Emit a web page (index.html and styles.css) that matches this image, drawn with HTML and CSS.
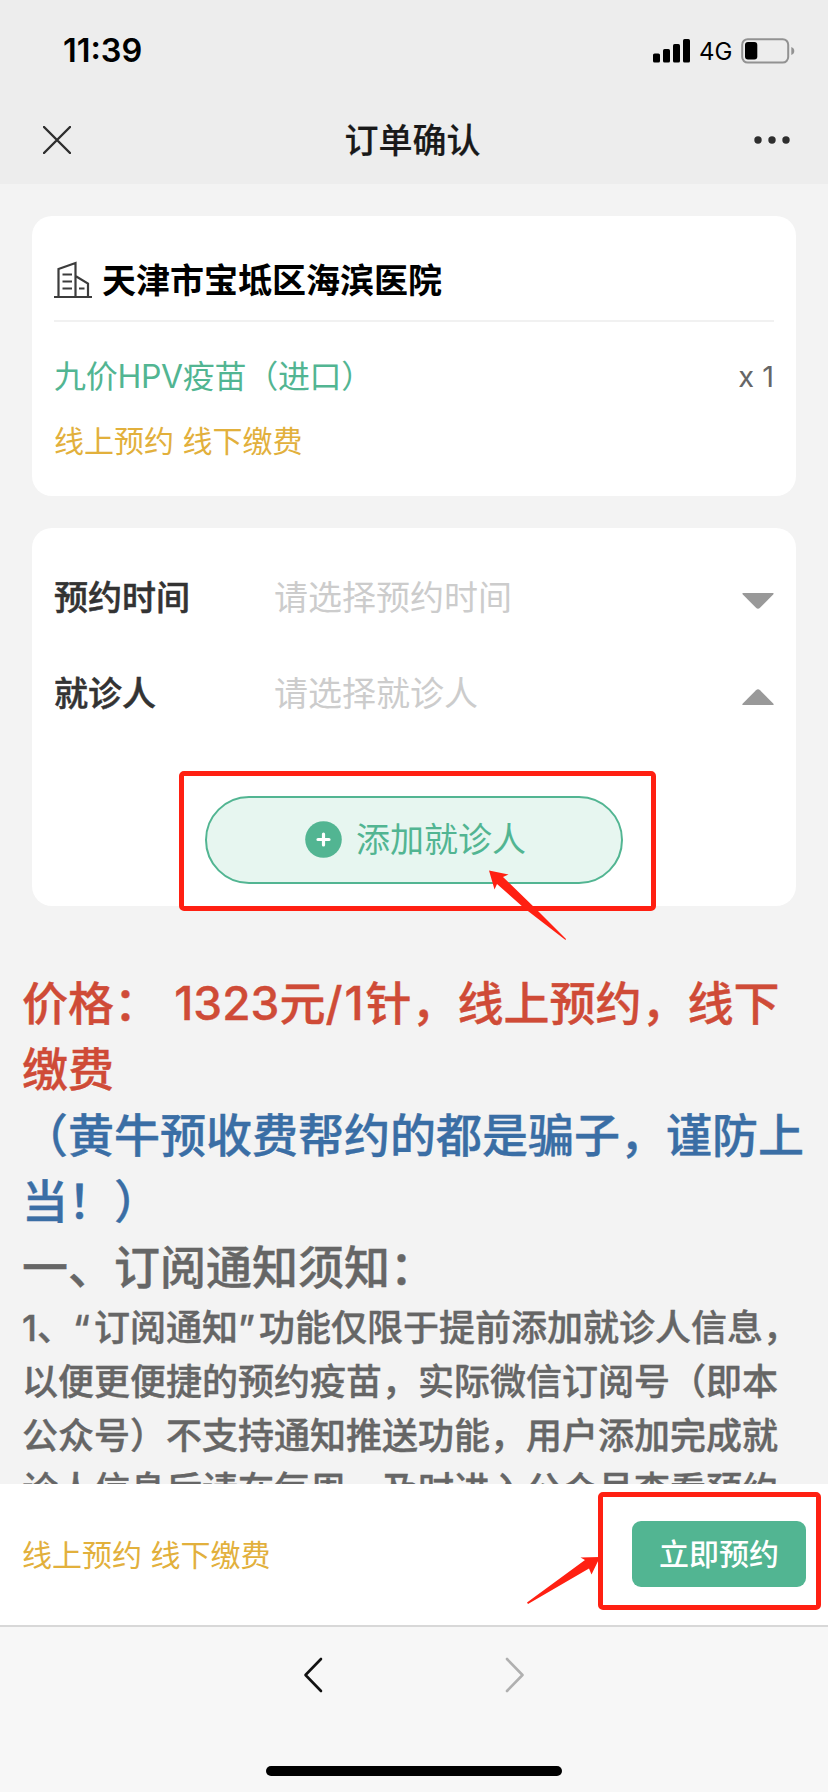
FILE: index.html
```html
<!DOCTYPE html>
<html lang="zh-CN">
<head>
<meta charset="utf-8">
<title>订单确认</title>
<link rel="stylesheet" href="styles.css">
</head>
<body>
<div class="screen">
  <header class="top">
    <div class="status">
      <span class="clock">11:39</span>
      <div class="indicators">
        <svg class="signal" width="37" height="24" viewBox="0 0 37 24"><rect x="0" y="14.5" width="7" height="9" rx="1.6"/><rect x="10" y="10" width="7" height="13.5" rx="1.6"/><rect x="20" y="5" width="7" height="18.5" rx="1.6"/><rect x="30" y="0" width="7" height="23.5" rx="1.6"/></svg>
        <span class="net">4G</span>
        <svg width="54" height="26" viewBox="0 0 54 26"><rect x="1.2" y="1.2" width="46" height="23.4" rx="5.5" fill="none" stroke="#929292" stroke-width="2"/><rect x="4" y="4" width="12.3" height="17.6" rx="3" fill="#000"/><path d="M50.3 9v8q3-1.2 3-4t-3-4z" fill="#929292"/></svg>
      </div>
    </div>
    <div class="nav">
      <svg width="28" height="28" viewBox="0 0 28 28"><path d="M1 1l26 26M27 1L1 27" stroke="#2e2e2e" stroke-width="2.4" stroke-linecap="round"/></svg>
      <h1 class="nav-title">订单确认</h1>
      <svg width="36" height="8" viewBox="0 0 36 8" fill="#2e2e2e"><circle cx="4" cy="4" r="3.7"/><circle cx="18" cy="4" r="3.7"/><circle cx="32" cy="4" r="3.7"/></svg>
    </div>
  </header>

  <main class="content">
    <section class="card order">
      <div class="hospital">
        <svg class="building" width="38" height="38" viewBox="0 0 38 38" fill="none" stroke="#3c3c3c" stroke-width="2.2"><path d="M0 36h38"/><path d="M4.500 36V8L21.500 2v34M21.500 15L34 22.500V36"/><path d="M8.500 13.500h9.500M8.500 20.500h9.500M8.500 27.500h9.500M25 27.500h5.500"/></svg>
        <h2 class="hospital-name">天津市宝坻区海滨医院</h2>
      </div>
      <div class="item"><span class="vaccine">九价HPV疫苗（进口）</span><span class="qty">x 1</span></div>
      <div class="pay">线上预约 线下缴费</div>
    </section>

    <section class="card form">
      <div class="field">
        <span class="label">预约时间</span><span class="placeholder">请选择预约时间</span>
        <svg class="caret" width="34" height="18" viewBox="0 0 34 18"><path d="M2.500 1h29q2 0 .7 1.500L19 15.800q-2 1.800-4 0L1.800 2.500Q.5 1 2.500 1z" fill="#999"/></svg>
      </div>
      <div class="field">
        <span class="label">就诊人</span><span class="placeholder">请选择就诊人</span>
        <svg class="caret" width="34" height="18" viewBox="0 0 34 18"><path d="M2.500 17h29q2 0 .7-1.500L19 2.200q-2-1.800-4 0L1.800 15.500Q.5 17 2.500 17z" fill="#999"/></svg>
      </div>
      <div class="add">
        <svg class="plus" width="37" height="37" viewBox="0 0 37 37"><circle cx="18.500" cy="18.500" r="18.300" fill="#52b592"/><path d="M18.500 13v11M13 18.500h11" stroke="#fff" stroke-width="3.2" stroke-linecap="round"/></svg>
        <span>添加就诊人</span>
      </div>
    </section>

    <article class="notice">
      <p class="big price">价格：<span class="gap"> </span>1323元<span class="per">/1</span>针，线上预约，线下<br>缴费</p>
      <p class="big warn">（黄牛预收费帮约的都是骗子，谨防上<br>当！）</p>
      <p class="big">一、订阅通知须知：</p>
      <p class="text">1、<span class="quote">“</span>订阅通知<span class="quote">”</span>功能仅限于提前添加就诊人信息，<br>以便更便捷的预约疫苗，实际微信订阅号（即本<br>公众号）不支持通知推送功能，用户添加完成就<br>诊人信息后请在每周，及时进入公众号查看预约</p>
    </article>
  </main>

  <footer class="action">
    <span class="pay-note">线上预约 线下缴费</span>
    <span class="submit">立即预约</span>
  </footer>
  <nav class="browser">
    <div class="arrows">
      <svg width="20" height="36" viewBox="0 0 20 36"><path d="M18 2L2.500 18 18 34" fill="none" stroke="#111" stroke-width="2.600" stroke-linecap="round" stroke-linejoin="round"/></svg>
      <svg width="20" height="36" viewBox="0 0 20 36"><path d="M2 2l15.500 16L2 34" fill="none" stroke="#b0b0b0" stroke-width="2.600" stroke-linecap="round" stroke-linejoin="round"/></svg>
    </div>
    <div class="home"></div>
  </nav>

  <div class="mark mark-add"></div>
  <div class="mark mark-submit"></div>
  <svg class="pointers" width="828" height="1792" viewBox="0 0 828 1792" fill="#ff2012"><path d="M489 870.500l19.500 4-5.500 2.500L537 910l29 29-.5 1L524 908 497 884l-2.500 5.500z"/><path d="M600 1557l-19.500.5 4.500 2.500L527 1602.500l1 1.500L589 1568.500l2.500 6z"/></svg>
</div>
</body>
</html>
```
FILE: styles.css
```css
* { box-sizing: border-box; margin: 0; padding: 0; }
body { font-family: Inter, "Noto Sans CJK SC", sans-serif; }
svg { display: block; flex: none; }
.screen { position: relative; width: 828px; height: 1792px; overflow: hidden; display: flex; flex-direction: column; background: #f3f3f3; white-space: nowrap; line-height: 48px; }

.top { flex: none; height: 184px; background: #ededed; }
.status { height: 96px; padding: 5px 33px 0 63px; display: flex; align-items: center; justify-content: space-between; }
.clock { font: 600 32.5px/40px Inter, sans-serif; }
.indicators { display: flex; align-items: center; }
.net { font: 400 24px/26px Inter, sans-serif; margin: 2px 10px 0 9px; width: 32px; }
.nav { height: 88px; padding: 0 38px 0 43px; display: flex; align-items: center; justify-content: space-between; }
.nav-title { font-size: 34px; font-weight: 500; line-height: 50px; padding-top: 1px; color: #191919; -webkit-text-stroke: .2px; }

.content { flex: none; height: 1300px; padding: 32px; overflow: hidden; }
.card { background: #fff; border-radius: 20px; padding: 0 22px; }
.order { height: 280px; }
.hospital { height: 106px; padding-top: 26px; border-bottom: 2px solid #f1f1f1; display: flex; align-items: center; gap: 10px; }
.building { margin-top: -3px; }
.hospital-name { font-size: 34px; font-weight: 700; line-height: 48px; }
.item { height: 64px; margin-top: 23px; display: flex; align-items: center; justify-content: space-between; font-size: 32px; }
.vaccine { color: #52b592; letter-spacing: -.3px; }
.qty { color: #666; font: 400 29px/40px Inter, sans-serif; }
.pay { font-size: 30px; line-height: 64px; color: #e2b03c; }

.form { height: 378px; margin-top: 32px; padding-top: 22px; }
.field { height: 96px; display: grid; grid-template-columns: 220px 1fr 34px; align-items: center; font-size: 34px; }
.label { color: #333; font-weight: 500; -webkit-text-stroke: .5px; }
.placeholder { color: #ccc; }
.caret { margin: 6px 0 0 1px; }
.add { width: 418px; height: 88px; margin: 54px auto 0; border: 2px solid #52b592; border-radius: 44px; background: #e7f6f0; display: flex; align-items: center; justify-content: center; gap: 14px; font-size: 34px; color: #52b592; padding-left: 3px; }
.plus { margin-top: -1px; }

.notice { margin: 64px -10px 0; color: #666; font-weight: 500; -webkit-text-stroke: .4px; }
.big { font-size: 46px; line-height: 66px; }
.gap { letter-spacing: 2px; }
.per { letter-spacing: 2px; }
.price { color: #cf4b37; }
.warn { color: #3a6ea5; }
.text { font-size: 36px; line-height: 54px; padding-top: 1px; }
.quote { letter-spacing: 4px; }

.action { flex: none; height: 141px; padding: 0 22px; background: #fff; display: flex; align-items: center; justify-content: space-between; font-size: 30px; }
.pay-note { color: #e2b03c; }
.submit { width: 174px; height: 66px; border-radius: 9px; background: #52b592; color: #fff; font-weight: 500; line-height: 66px; text-align: center; margin-top: -1px; }

.browser { flex: 1; border-top: 2px solid #d8d8d8; background: #f7f7f7; padding-top: 30px; }
.arrows { display: flex; justify-content: center; gap: 182px; }
.home { width: 296px; height: 10px; margin: 73px auto 0; border-radius: 5px; background: #000; }

.mark { position: absolute; border: 5px solid #ff2012; border-radius: 5px; }
.mark-add { left: 179px; top: 771px; width: 477px; height: 140px; }
.mark-submit { left: 598px; top: 1492px; width: 223px; height: 118px; }
.pointers { position: absolute; left: 0; top: 0; }
```
